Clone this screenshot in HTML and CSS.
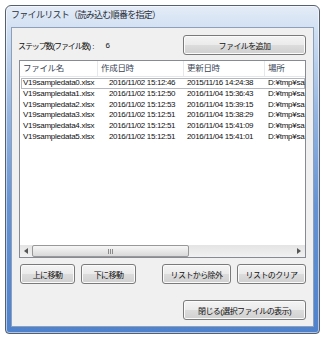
FILE: index.html
```html
<!DOCTYPE html>
<html lang="ja">
<head>
    <meta charset="UTF-8">
    <meta name="viewport" content="width=device-width, initial-scale=1.0">
    <title>ファイルリスト</title>
    <link rel="stylesheet" href="styles.css">
</head>
<body>

    <div class="window">
        <div class="titlebar">ファイルリスト（読み込む順番を指定）</div>

        <div class="client">
            <div class="top-row">
                <span class="step-label">ステップ数(ファイル数)<span class="colon">:</span></span>
                <span class="step-count">6</span>
                <button class="btn btn-add">ファイルを追加</button>
            </div>

            <div class="list">
                <div class="list-head">
                    <div class="hcell">ファイル名</div>
                    <div class="hcell">作成日時</div>
                    <div class="hcell">更新日時</div>
                    <div class="hcell">場所</div>
                </div>

                <div class="list-body">
                    <div class="row focused">
                        <div class="cell">V19sampledata0.xlsx</div>
                        <div class="cell created">2016/11/02 15:12:46</div>
                        <div class="cell date">2015/11/16 14:24:38</div>
                        <div class="cell place">D:¥tmp¥sa</div>
                    </div>
                    <div class="row">
                        <div class="cell">V19sampledata1.xlsx</div>
                        <div class="cell created">2016/11/02 15:12:50</div>
                        <div class="cell date">2016/11/04 15:36:43</div>
                        <div class="cell place">D:¥tmp¥sa</div>
                    </div>
                    <div class="row">
                        <div class="cell">V19sampledata2.xlsx</div>
                        <div class="cell created">2016/11/02 15:12:53</div>
                        <div class="cell date">2016/11/04 15:39:15</div>
                        <div class="cell place">D:¥tmp¥sa</div>
                    </div>
                    <div class="row">
                        <div class="cell">V19sampledata3.xlsx</div>
                        <div class="cell created">2016/11/02 15:12:51</div>
                        <div class="cell date">2016/11/04 15:38:29</div>
                        <div class="cell place">D:¥tmp¥sa</div>
                    </div>
                    <div class="row">
                        <div class="cell">V19sampledata4.xlsx</div>
                        <div class="cell created">2016/11/02 15:12:51</div>
                        <div class="cell date">2016/11/04 15:41:09</div>
                        <div class="cell place">D:¥tmp¥sa</div>
                    </div>
                    <div class="row">
                        <div class="cell">V19sampledata5.xlsx</div>
                        <div class="cell created">2016/11/02 15:12:51</div>
                        <div class="cell date">2016/11/04 15:41:01</div>
                        <div class="cell place">D:¥tmp¥sa</div>
                    </div>
                </div>

                <!-- horizontal scrollbar -->
                <div class="hscroll">
                    <div class="sb-arrow">
                        <svg width="4" height="6" viewBox="0 0 4 6"><path d="M4 0 L0 3 L4 6 Z" fill="#555"/></svg>
                    </div>
                    <div class="sb-track">
                        <div class="sb-thumb"><span class="grip"></span></div>
                    </div>
                    <div class="sb-arrow">
                        <svg width="4" height="6" viewBox="0 0 4 6"><path d="M0 0 L4 3 L0 6 Z" fill="#555"/></svg>
                    </div>
                </div>
            </div>

            <div class="btn-row">
                <div class="btn-group">
                    <button class="btn btn-small">上に移動</button>
                    <button class="btn btn-small">下に移動</button>
                </div>
                <div class="btn-group">
                    <button class="btn btn-mid">リストから除外</button>
                    <button class="btn btn-mid">リストのクリア</button>
                </div>
            </div>

            <div class="close-row">
                <button class="btn btn-close">閉じる(選択ファイルの表示)</button>
            </div>
        </div>
    </div>

</body>
</html>
```

FILE: styles.css
```css
body {
    margin: 0;
    padding: 0;
    background-color: #fff;
    font-family: "Liberation Sans", "Noto Sans CJK JP", sans-serif;
    font-size: 8px;
    color: #111;
}
.window {
    margin: 5px;
    width: 315px;
    height: 329px;
    box-sizing: border-box;
    border: 1px solid #56606e;
    border-radius: 6px 6px 4px 4px;
    background: linear-gradient(to bottom, #e4ecf7 0, #cddef2 28px, #93b4e0 110px, #6592d2 200px, #4f82cc 100%);
    box-shadow: inset 0 0 0 1px rgba(255,255,255,0.55);
    display: flex;
    flex-direction: column;
}
.titlebar {
    height: 21px;
    padding-left: 5px;
    line-height: 18px;
    font-size: 9px;
    letter-spacing: -0.7px;
    color: #2a2f38;
}
.client {
    flex: 1;
    margin: 0 5px 6px 5px;
    border: 1px solid #8d9fb9;
    background: #f0f0f0;
    padding: 7px 7px 0 7px;
    display: flex;
    flex-direction: column;
}
.top-row {
    height: 20px;
    display: flex;
    align-items: center;
}
.step-label {
    letter-spacing: -1.1px;
    margin-left: -1px;
}
.colon {
    letter-spacing: 0;
    margin-left: 2px;
}
.step-count {
    margin-left: 11px;
}
.btn {
    font: inherit;
    letter-spacing: -0.6px;
    color: #111;
    height: 20px;
    padding: 0;
    border: 1px solid #7a7a7a;
    border-radius: 3px;
    background: linear-gradient(to bottom, #f4f4f4 0%, #ebebeb 48%, #dcdcdc 52%, #d0d0d0 100%);
    box-shadow: inset 0 0 0 1px #fbfbfb;
}
.btn-add {
    margin-left: auto;
    width: 123px;
}

/* list view */
.list {
    margin-top: 5px;
    height: 198px;
    box-sizing: border-box;
    border: 1px solid #868a92;
    background: #fff;
    display: flex;
    flex-direction: column;
    overflow: hidden;
}
.list-head {
    height: 16px;
    box-sizing: border-box;
    border-bottom: 1px solid #e3e6ea;
    display: grid;
    grid-template-columns: 78px 86px 81px 1fr;
    font-size: 8.5px;
    letter-spacing: -0.3px;
    color: #3a4656;
}
.hcell {
    padding-left: 3px;
    line-height: 15px;
    border-right: 1px solid #e6e8eb;
    white-space: nowrap;
}
.hcell:last-child {
    border-right: none;
}
.list-body {
    flex: 1;
    padding-top: 1px;
}
.row {
    margin-left: 1px;
    height: 10.8px;
    line-height: 10.8px;
    display: grid;
    grid-template-columns: 77px 86px 81px 1fr;
    white-space: nowrap;
    letter-spacing: -0.25px;
}
.row.focused {
    box-shadow: inset 0 0 0 1px #b4b8be;
}
.cell {
    padding-left: 2px;
    overflow: hidden;
}
.created {
    padding-left: 11px;
    letter-spacing: -0.35px;
}
.date {
    padding-left: 3px;
    letter-spacing: -0.35px;
}
.place {
    padding-left: 3px;
}
.hscroll {
    height: 12px;
    display: flex;
    background: linear-gradient(to bottom, #e4e4e4, #f1f1f1);
}
.sb-arrow {
    width: 12px;
    display: flex;
    align-items: center;
    justify-content: center;
}
.sb-track {
    flex: 1;
}
.sb-thumb {
    width: 157px;
    height: 12px;
    box-sizing: border-box;
    border: 1px solid #989898;
    border-radius: 2px;
    background: linear-gradient(to bottom, #f6f6f6 0%, #e8e8e8 50%, #d9d9d9 100%);
    display: flex;
    align-items: center;
    justify-content: center;
}
.grip {
    width: 5px;
    height: 5px;
    background: repeating-linear-gradient(to right, #8a8a8a 0, #8a8a8a 1px, transparent 1px, transparent 2px);
}

/* bottom buttons */
.btn-row {
    margin-top: 6px;
    display: flex;
    justify-content: space-between;
    padding-left: 1px;
}
.btn-group {
    display: flex;
    gap: 6px;
}
.btn-small {
    width: 55px;
}
.btn-mid {
    width: 69px;
}
.close-row {
    margin-top: 16px;
    display: flex;
    justify-content: flex-end;
}
.btn-close {
    width: 123px;
}
```
